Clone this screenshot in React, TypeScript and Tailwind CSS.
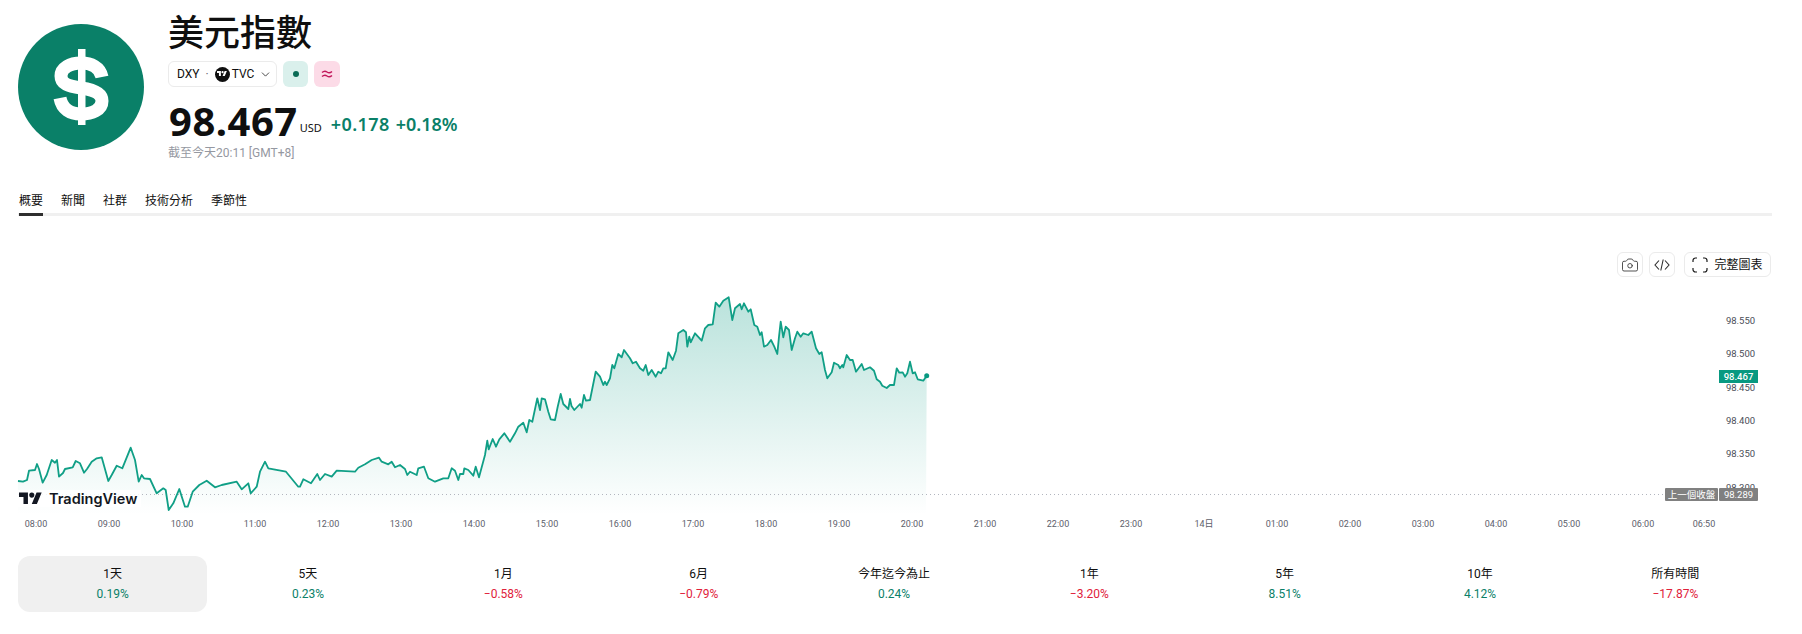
import { Camera, ChevronDown } from "lucide-react";

const linePoints =
  "18,481 23,481.7 27,480 29,470.7 35,470 37,464 39,469 42.7,482.7 46.7,475 51.7,460 55,462.7 57,460 59,476.7 63,473 65,469 72.7,467.3 75.7,461 80,463.3 84,472.7 87,469 91.7,461.7 96.7,458.3 101.7,457.3 108.3,481 111.7,475 116.7,465.7 122.3,468.3 130.7,447.7 135,460 138.7,481.7 141.7,475 144,478.3 150,479 156.7,493.3 163.3,488.3 165.7,490 168.7,510 173.3,503.3 179.3,489 185,506.7 187.7,506.7 192.7,491.7 199.3,485 206.7,480.7 215,487.3 221.7,485 236.7,481.7 241.7,489.3 248.3,483.3 250.7,493.3 256.7,486.7 260,471.7 265,461.7 268.3,468.3 286,471.7 298.3,486.7 300,486.7 303.3,479.3 311,483.3 317.3,474 320,480 325,474 331.7,476.7 336.7,470.7 355,471.7 358.3,467.7 365,464.3 371.7,460 379,457.7 381.7,461.7 388.3,464.3 391.7,461.7 395,467.3 400,465 405,469 407.3,475 410,471.7 416.7,475 418.3,468.3 424,466.7 428.3,478.3 435,481.7 443.3,478.3 448.3,478.3 451.7,468.3 455,470.7 458.3,480 460,474 463.3,474 464.3,468.3 468.3,470 473.3,475.7 475.7,466.7 479,477.3 485,455 487.3,440.7 488.7,449.3 492.7,439 496,446.7 499.3,439.3 504.3,433.3 510,441.7 515,433.3 518.3,426.7 523.3,422.7 526.7,432.3 529.3,420 532.3,421.7 537.3,398.3 540,410 541.7,398.3 545,399.3 548.3,411.7 550.7,419.3 555,420 557.7,406.7 560.7,394 563.3,404 568.3,409 570,399 571.5,406 574.3,410 580,404 581.7,407.7 584,395 586,400.7 590,400 595.7,371.7 600,376.7 603.3,385 605,381.7 606.7,385 610,378.3 612.3,365 614.3,368.3 618.3,354 621.7,357.3 624,350 630,358.3 632.7,363.3 636,361.7 640,368.3 643.3,370.7 645.7,365 648.3,375 651.7,370 655.7,376.7 658.3,371.7 661,373.3 663.3,368.3 665.7,368.3 668.3,352.3 672.7,360 676,350.7 678.3,333.3 683.3,330 686,332.3 687.3,346.7 689.3,336.7 690.7,342.3 695,333.3 701.7,340.7 705,328.3 708.3,325 712.7,324.3 715.7,302.7 719.3,306.7 723.3,300.7 728.7,297.3 732.3,320 735,308.3 740,304 741.7,309.3 744,303.3 748.3,311.7 750.7,309.3 754.3,325 757.3,326.7 760,335 761.7,332.3 764,346.7 767.3,345 771,340 774.3,346.7 777.3,354 779,336.7 780.7,321.7 783.3,337.3 785.7,326.7 789,330 791.7,350 795,338.3 797.3,331.7 800.7,336.7 803.3,333.3 808.3,335 811.7,331.7 816,348.3 819.3,354 821.7,352.3 825,370 827.3,378.3 831.7,372.3 834,362.7 838.3,365 840,368.3 842.3,365 843.3,367.3 846.7,355 850,360 852.7,360 856,371.7 861.7,364 864,370 870,367.3 874,370.7 876.7,379.3 880,381.7 882.3,385.7 886.7,388 890,385 894,385 896.7,368.3 899.3,372.7 902.7,372.3 905,376.7 907.3,373.3 910,361.7 912.7,373.3 915,372.3 917.7,379.3 923.3,380.7 926.7,375.7";

const timeLabels: [string, number][] = [
  ["08:00", 36], ["09:00", 109], ["10:00", 182], ["11:00", 255], ["12:00", 328], ["13:00", 401],
  ["14:00", 474], ["15:00", 547], ["16:00", 620], ["17:00", 693], ["18:00", 766], ["19:00", 839],
  ["20:00", 912], ["21:00", 985], ["22:00", 1058], ["23:00", 1131], ["14日", 1204], ["01:00", 1277],
  ["02:00", 1350], ["03:00", 1423], ["04:00", 1496], ["05:00", 1569], ["06:00", 1643], ["06:50", 1704],
];

const priceLabels: [string, number][] = [
  ["98.550", 324], ["98.500", 357], ["98.450", 390.5], ["98.400", 424], ["98.350", 457], ["98.300", 490.5],
];

const periods = [
  { label: "1天", value: "0.19%", up: true },
  { label: "5天", value: "0.23%", up: true },
  { label: "1月", value: "−0.58%", up: false },
  { label: "6月", value: "−0.79%", up: false },
  { label: "今年迄今為止", value: "0.24%", up: true },
  { label: "1年", value: "−3.20%", up: false },
  { label: "5年", value: "8.51%", up: true },
  { label: "10年", value: "4.12%", up: true },
  { label: "所有時間", value: "−17.87%", up: false },
];

const tabs = ["概要", "新聞", "社群", "技術分析", "季節性"];

function DollarLogo() {
  return (
    <svg width="126" height="126" viewBox="0 0 126 126" className="mt-[11px] shrink-0">
      <circle cx="63" cy="63" r="63" fill="#0a8068" />
      <rect x="60" y="25" width="7.5" height="76" fill="#fff" />
      <path
        d="M84 53C82 43 73 39 63 39C52 39 43 44 43 52C43 60 50 62 63 64C78 66 84 70 84 77C84 86 74 90 63 90C52 90 44 85 42 74"
        fill="none"
        stroke="#fff"
        strokeWidth="13"
      />
    </svg>
  );
}

function TvMark({ className, fill }: { className: string; fill: string }) {
  return (
    <svg viewBox="0 0 36 28" className={className} fill={fill}>
      <path d="M14 22H7V11H0V4h14v18zM28 22h-8l7.500-18h8L28 22z" />
      <circle cx="20" cy="8" r="4" />
    </svg>
  );
}

function Header() {
  return (
    <div className="flex gap-[24px] pl-[18px] pt-[13px]">
      <DollarLogo />
      <div>
        <h1 className="text-[36px] leading-[40px] font-medium text-[#0f0f0f]">美元指數</h1>
        <div className="mt-[8px] flex gap-[6px]">
          <button className="flex h-[26px] w-[109px] items-center rounded-md border border-[#ebebeb] pl-[8px] font-['Roboto','Noto_Sans',sans-serif] text-[12px] text-[#0f0f0f]">
            <span>DXY</span>
            <span className="mx-[6px] text-[#6a6d78]">·</span>
            <span className="flex h-[15px] w-[15px] items-center justify-center rounded-full bg-[#0f0f0f]">
              <TvMark className="w-[10px]" fill="#fff" />
            </span>
            <span className="ml-[2px]">TVC</span>
            <ChevronDown size={13} strokeWidth={1.5} className="ml-[5px] text-[#222]" />
          </button>
          <span className="flex h-[26px] w-[25px] items-center justify-center rounded-md bg-[#daf0ec]">
            <span className="h-[6px] w-[6px] rounded-full bg-[#0a6b55]" />
          </span>
          <span className="flex h-[26px] w-[26px] items-center justify-center rounded-md bg-[#fcdbe7]">
            <svg width="12" height="12" viewBox="0 0 12 12" fill="none" stroke="#c2185b" strokeWidth="1.4">
              <path d="M1 4.600C3 2.800 4.500 3 6 4S9 5.200 11 3.400" />
              <path d="M1 8.600C3 6.800 4.500 7 6 8S9 9.200 11 7.400" />
            </svg>
          </span>
        </div>
        <div className="ml-px mt-[12px] flex h-[44px] items-center">
          <span className="text-[40px] leading-[44px] font-bold tracking-[0.5px] text-[#0f0f0f]">98.467</span>
          <span className="mt-[14px] ml-[2px] text-[11px] text-[#0f0f0f]">USD</span>
          <span className="mt-[6px] ml-[9px] text-[18px] font-semibold tracking-[0.4px] text-[#0a8068]">+0.178</span>
          <span className="mt-[6px] ml-[6px] text-[18px] font-semibold text-[#0a8068]">+0.18%</span>
        </div>
        <div className="mt-[2px] font-['Roboto','Noto_Sans_CJK_TC',sans-serif] text-[12px] leading-[16px] text-[#9598a1]">截至今天20:11 [GMT+8]</div>
      </div>
    </div>
  );
}

function TabBar() {
  return (
    <div className="ml-[18px] mt-[32px] w-[1754px]">
      <div className="flex gap-[18px] pl-px text-[12px] leading-[16px] text-[#0f0f0f]">
        {tabs.map((tab) => (
          <span key={tab}>{tab}</span>
        ))}
      </div>
      <div className="mt-[4px] h-[3px] bg-[#f0f0f0]">
        <div className="ml-px h-[3px] w-[24px] bg-[#2e2e2e]" />
      </div>
    </div>
  );
}

function ChartButtons() {
  return (
    <div className="mt-[36px] flex w-[1771px] justify-end gap-[6px]">
      <button className="flex h-[25px] w-[26px] items-center justify-center rounded-md border border-[#ebebeb] text-[#2e2e2e]">
        <Camera size={18} strokeWidth={1.1} />
      </button>
      <button className="mr-[3px] flex h-[25px] w-[26px] items-center justify-center rounded-md border border-[#ebebeb]">
        <svg width="16" height="16" viewBox="0 0 16 16" fill="none" stroke="#2e2e2e" strokeWidth="1.1">
          <path d="M5 3.500 1 8l4 4.500M11 3.500l4 4.500-4 4.500M9.200 2.500 6.800 13.500" />
        </svg>
      </button>
      <button className="flex h-[25px] w-[87px] items-center justify-center gap-[6px] rounded-md border border-[#ebebeb] text-[12px] text-[#0f0f0f]">
        <svg width="16" height="16" viewBox="0 0 16 16" fill="none" stroke="#1a1a1a" strokeWidth="1.2">
          <path d="M5 1H3.500A2.500 2.500 0 0 0 1 3.500V5M11 1h1.500A2.500 2.500 0 0 1 15 3.500V5M5 15H3.500A2.500 2.500 0 0 1 1 12.500V11M11 15h1.500a2.500 2.500 0 0 0 2.500-2.500V11" />
        </svg>
        完整圖表
      </button>
    </div>
  );
}

function Chart() {
  return (
    <svg width="1802" height="260" viewBox="0 280 1802 260" className="mt-[3px] block font-['Roboto',sans-serif]">
      <defs>
        <linearGradient id="areaFill" gradientUnits="userSpaceOnUse" x1="0" y1="297" x2="0" y2="515">
          <stop offset="0%" stopColor="#089981" stopOpacity={0.28} />
          <stop offset="100%" stopColor="#089981" stopOpacity={0} />
        </linearGradient>
      </defs>
      <polygon points={`18,515 ${linePoints} 926,515`} fill="url(#areaFill)" />
      <line x1="18" x2="1665" y1="494.500" y2="494.500" stroke="#b2b5be" strokeDasharray="1 3" />
      <polyline points={linePoints} fill="none" stroke="#109f86" strokeWidth="1.800" strokeLinejoin="round" />
      <circle cx="926.700" cy="375.700" r="2.500" fill="#089981" />

      {priceLabels.map(([text, y]) => (
        <text key={text} x="1740.500" y={y} textAnchor="middle" fontSize="9.500" fill="#4a4d57">
          {text}
        </text>
      ))}
      <rect x="1719" y="370" width="39" height="13" fill="#089981" />
      <text x="1738.500" y="380" textAnchor="middle" fontSize="9.500" fontWeight="500" fill="#fff">
        98.467
      </text>
      <rect x="1665" y="488" width="53" height="13" rx="1" fill="#808080" />
      <text x="1691.500" y="498" textAnchor="middle" fontSize="9.500" fill="#fff" className="font-['Noto_Sans_CJK_TC',sans-serif]">
        上一個收盤
      </text>
      <rect x="1719" y="488" width="39" height="13" rx="1" fill="#808080" />
      <text x="1738.500" y="498" textAnchor="middle" fontSize="9.500" fill="#fff">
        98.289
      </text>

      {timeLabels.map(([text, x]) => (
        <text key={text} x={x} y="527" textAnchor="middle" fontSize="9" fill="#5d606b" className="font-['Roboto','Noto_Sans_CJK_TC',sans-serif]">
          {text}
        </text>
      ))}

      <rect x="17" y="490" width="124" height="17" fill="#fff" opacity={0.85} />
    </svg>
  );
}

function Periods() {
  return (
    <div className="ml-[18px] mt-[16px] grid w-[1752px] grid-cols-9 gap-[6px]">
      {periods.map((p, i) => (
        <div
          key={p.label}
          className={`flex h-[56px] flex-col items-center justify-center rounded-xl font-['Roboto','Noto_Sans_CJK_TC',sans-serif] text-[12px] leading-[20px] ${
            i === 0 ? "bg-[#f0f0f0]" : ""
          }`}
        >
          <span className="text-[#0f0f0f]">{p.label}</span>
          <span className={p.up ? "text-[#0a8068]" : "text-[#e0213a]"}>{p.value}</span>
        </div>
      ))}
    </div>
  );
}

export default function App() {
  return (
    <div className="relative h-[634px] w-[1802px] overflow-hidden bg-white font-['Noto_Sans','Noto_Sans_CJK_TC',sans-serif]">
      <Header />
      <TabBar />
      <ChartButtons />
      <Chart />
      <div className="absolute left-[19px] top-[490px] flex items-center gap-[7px]">
        <TvMark className="w-[23px]" fill="#131722" />
        <span className="font-['Inter',sans-serif] text-[14.500px] leading-[18px] font-semibold text-[#131722]">TradingView</span>
      </div>
      <Periods />
    </div>
  );
}
